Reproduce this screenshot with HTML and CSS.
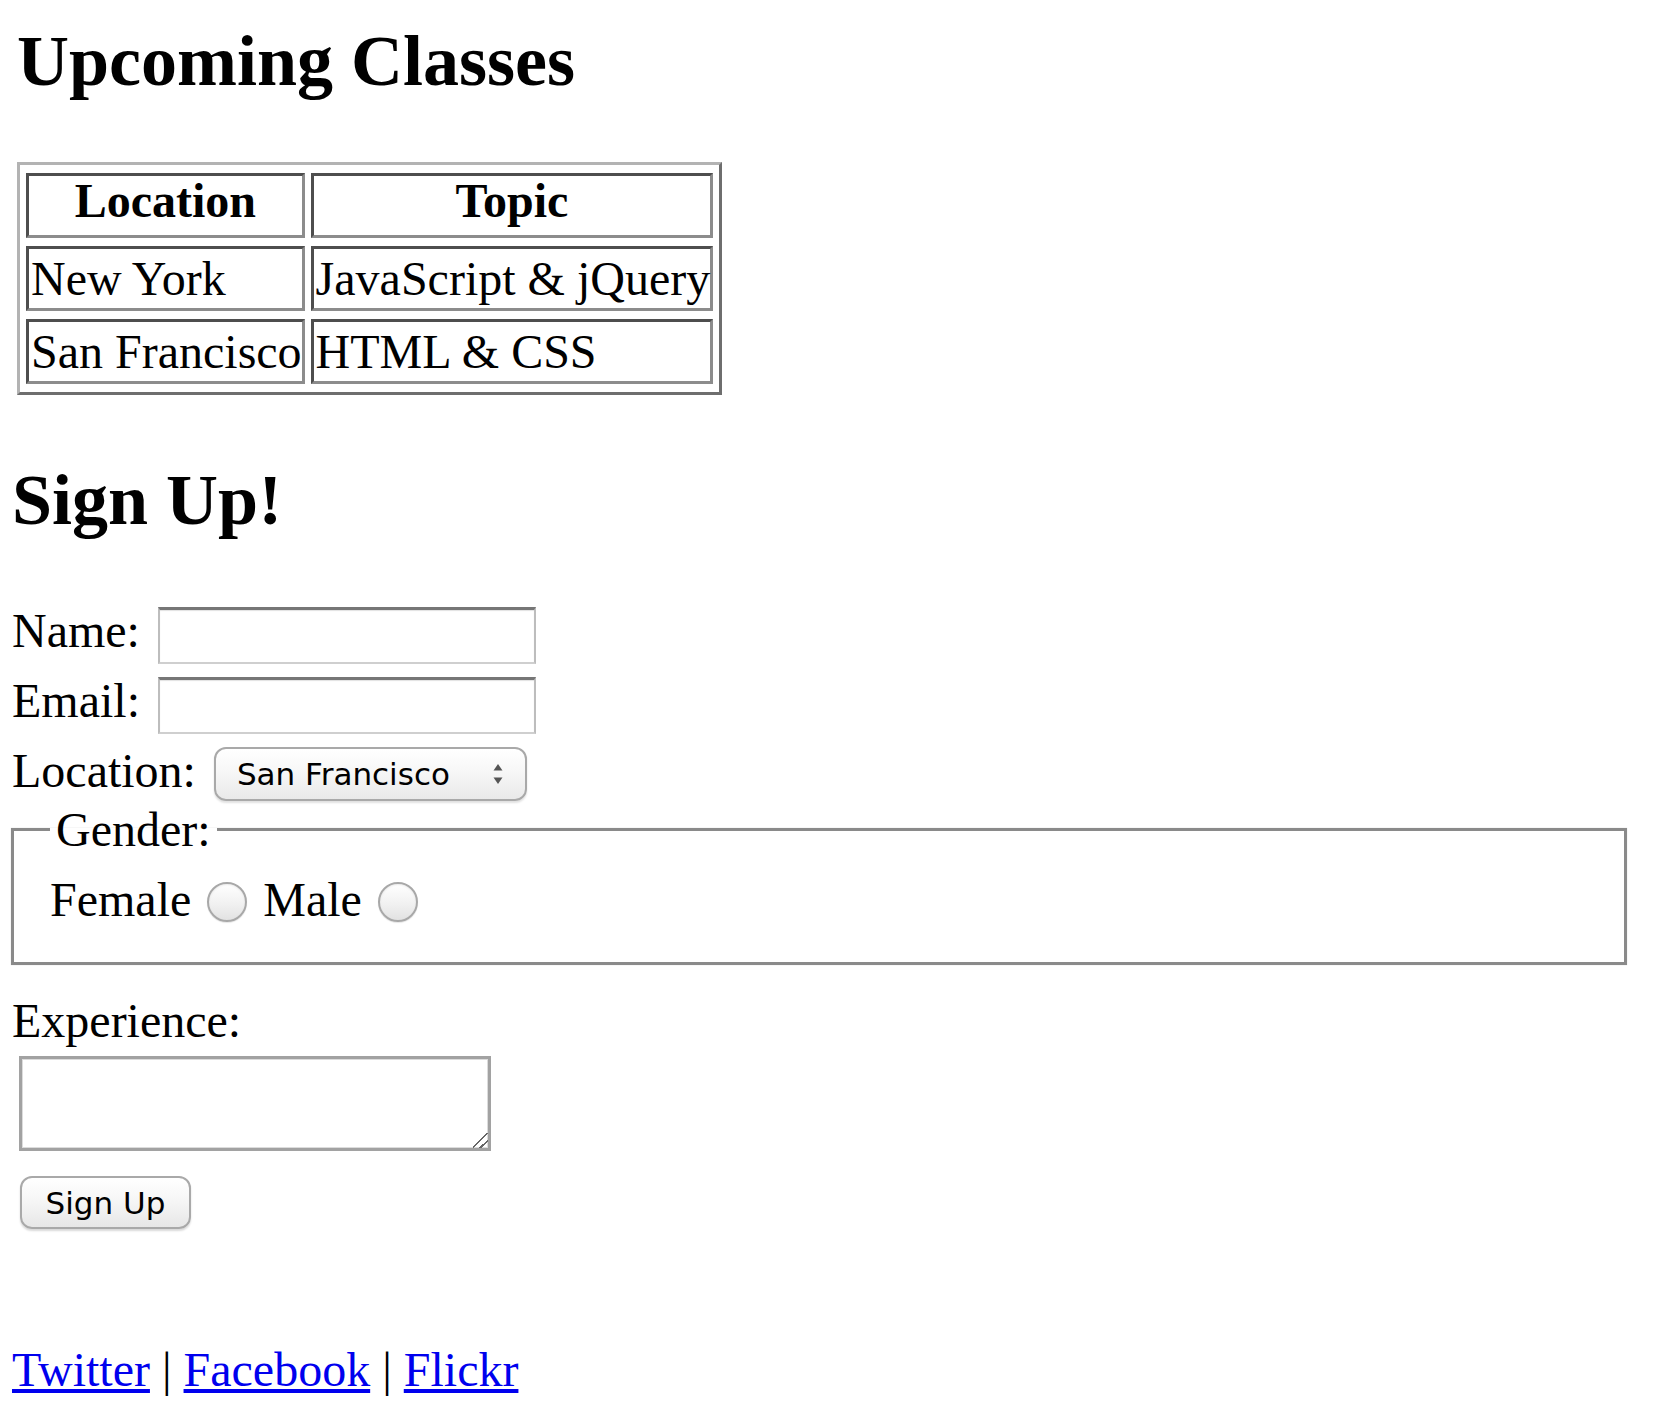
FILE: index.html
```html
<!DOCTYPE html>
<html lang="en">
<head>
<meta charset="utf-8">
<title>Upcoming Classes</title>
<link rel="stylesheet" href="styles.css">
</head>
<body>
<h1 class="page-title">Upcoming Classes</h1>
<table class="classes">
  <thead>
    <tr><th class="col-loc">Location</th><th class="col-topic">Topic</th></tr>
  </thead>
  <tbody>
    <tr><td>New York</td><td>JavaScript &amp; jQuery</td></tr>
    <tr><td>San Francisco</td><td>HTML &amp; CSS</td></tr>
  </tbody>
</table>
<h2 class="section-title">Sign Up!</h2>
<form class="signup">
  <div class="field-row"><label class="field-label" for="name">Name:</label><input class="text-input" id="name" type="text"></div>
  <div class="field-row email-row"><label class="field-label" for="email">Email:</label><input class="text-input" id="email" type="email"></div>
  <div class="field-row location-row"><label class="field-label" for="loc">Location:</label><span class="select-wrap"><select class="select" id="loc"><option>New York</option><option selected>San Francisco</option></select><svg class="select-arrows" width="12" height="24" viewBox="0 0 12 24"><path d="M1.5 8.5 L6 2 L10.5 8.5 Z" fill="#555"/><path d="M1.5 15.5 L6 22 L10.5 15.5 Z" fill="#555"/></svg></span></div>
  <fieldset class="gender">
    <legend class="gender-legend">Gender:</legend>
    <div class="radio-line">Female <input class="radio" type="radio" name="gender"> Male <input class="radio" type="radio" name="gender"></div>
  </fieldset>
  <p class="exp-label">Experience:</p>
  <textarea class="exp-box"></textarea>
  <button class="submit" type="button">Sign Up</button>
</form>
<footer class="links"><a href="#">Twitter</a> | <a href="#">Facebook</a> | <a href="#">Flickr</a></footer>
</body>
</html>
```
FILE: styles.css
```css
html { background: #fff; }
body {
  margin: 0;
  padding: 0 0 0 12px;
  font-family: "Liberation Serif", "Times New Roman", serif;
  font-size: 48px;
  color: #000;
}
.page-title {
  margin: 21px 0 0 5px;
  font-size: 72px;
  line-height: 80px;
  font-weight: bold;
}
.classes {
  margin: 61px 0 0 5px;
  border-width: 3px;
  border-style: solid;
  border-color: #b3b3b3 #6e6e6e #6e6e6e #b3b3b3;
  border-spacing: 6px 8px;
  font-size: 48px;
}
.classes th,
.classes td {
  white-space: nowrap;
  border-width: 3px;
  border-style: solid;
  border-color: #4e4e4e #8c8c8c #8c8c8c #4e4e4e;
}
.classes th {
  font-weight: bold;
  text-align: center;
  line-height: 50px;
  padding: 0 1px 9px;
}
.classes td {
  text-align: left;
  line-height: 55px;
  padding: 2px 0 2px 2px;
}
.section-title {
  margin: 65px 0 0 0;
  font-size: 72px;
  line-height: 80px;
  font-weight: bold;
}
.signup { margin: 67px 0 0 0; }
.field-row {
  display: flex;
  align-items: flex-start;
  gap: 18px;
}
.email-row, .location-row { margin-top: 13px; }
.field-label { line-height: 48px; }
.text-input {
  box-sizing: border-box;
  width: 378px;
  height: 57px;
  margin: 0;
  padding: 0 6px;
  border-style: solid;
  border-width: 3px 2px 2px;
  border-color: #767676 #bdbdbd #cfcfcf #bdbdbd;
  box-shadow: inset 0 1px 1px rgba(0,0,0,0.12);
  background: #fff;
  font-size: 31px;
  font-family: "DejaVu Sans", sans-serif;
  outline: none;
}
.select-wrap {
  position: relative;
  display: block;
}
.select {
  display: block;
  appearance: none;
  -webkit-appearance: none;
  box-sizing: border-box;
  width: 313px;
  height: 54px;
  margin: 0;
  padding: 0 40px 0 21px;
  border: 2px solid #a9a9a9;
  border-radius: 12px;
  background: linear-gradient(#ffffff, #f6f6f6 50%, #e9e9e9);
  box-shadow: 0 2px 2px rgba(0,0,0,0.12);
  font-family: "DejaVu Sans", sans-serif;
  font-size: 31px;
  color: #000;
}
.select-arrows {
  position: absolute;
  left: 278px;
  top: 15px;
  pointer-events: none;
}
.gender {
  margin: 1px 34px 0 -1px;
  padding: 15px 10px 35px 36px;
  border: 3px solid #8a8a8a;
  box-shadow: 0 0 1px #cfcfcf;
}
.gender-legend {
  padding: 0 6px;
  line-height: 55px;
}
.radio-line { line-height: 55px; }
.radio {
  appearance: none;
  -webkit-appearance: none;
  box-sizing: border-box;
  width: 40px;
  height: 40px;
  margin: 0 4px;
  vertical-align: -6px;
  border: 2px solid #a8a8a8;
  border-radius: 50%;
  background: linear-gradient(#ffffff, #f1f1f1 55%, #e2e2e2);
  box-shadow: inset 0 1px 2px rgba(0,0,0,0.08), 0 1px 1px rgba(0,0,0,0.1);
}
.exp-label {
  margin: 28px 0 0 0;
  line-height: 55px;
}
.exp-box {
  display: block;
  box-sizing: border-box;
  width: 472px;
  height: 95px;
  margin: 8px 0 0 7px;
  border: 3px solid #a2a2a2;
  box-shadow: inset 0 0 0 1px #dcdcdc;
  background: #fff;
}
.exp-box::-webkit-scrollbar { width: 22px; height: 22px; }
.exp-box::-webkit-resizer {
  background: linear-gradient(135deg, transparent 45%, #666 45%, #666 52%, transparent 52%, transparent 70%, #666 70%, #666 77%, transparent 77%);
}
.submit {
  display: block;
  box-sizing: border-box;
  width: 171px;
  height: 53px;
  margin: 25px 0 0 8px;
  padding: 0;
  border: 2px solid #a9a9a9;
  border-radius: 12px;
  background: linear-gradient(#ffffff, #f5f5f5 50%, #e7e7e7);
  box-shadow: 0 2px 2px rgba(0,0,0,0.15);
  font-family: "DejaVu Sans", sans-serif;
  font-size: 31px;
  color: #000;
}
.links {
  margin: 113px 0 0 0;
  line-height: 55px;
}
.links a { color: #0000ee; text-decoration: underline; }
```
